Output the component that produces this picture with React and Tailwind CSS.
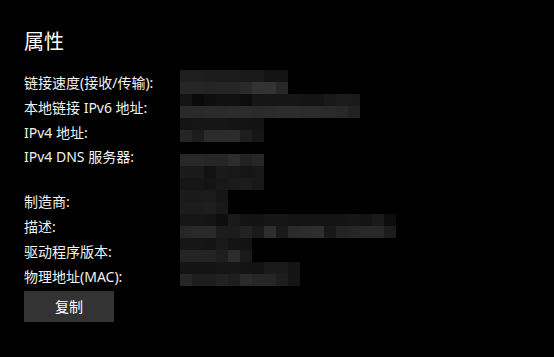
import React from "react";

const rows = [
  ["1e1e1e","1e1e1e","1c1c1c","1c1c1c","1c1c1c","1a1a1a","1a1a1a","141414","141414"],
  ["262626","262626","242424","262626","262626","2a2a2a","333333","333333","282828"],
  ["141414","0a0a0a","0e0e0e","111111","111111","0c0c0c","151515","161616","161616","161616","141414","141414","181818","1c1c1c","1a1a1a"],
  ["2a2a2a","2a2a2a","2b2b2b","2b2b2b","2c2c2c","2c2c2c","2a2a2a","2b2b2b","2c2c2c","2c2c2c","2b2b2b","2b2b2b","2a2a2a","282828","222222"],
  ["141414","161616","161616","161616","141414","141414","121212"],
  ["252525","1c1c1c","2b2b2b","2b2b2b","2b2b2b","1e1e1e","161616"],
  null,
  ["282828","282828","262626","262626","2d2d2d","222222","262626"],
  ["1a1a1a","1a1a1a","121212","1a1a1a","181818","151515","181818"],
  ["161616","161616","141414","181818","1a1a1a","1c1c1c","181818"],
  ["1a1a1a","1a1a1a","1c1c1c","161616"],
  ["1c1c1c","1c1c1c","1e1e1e","181818"],
  ["161616","161616","141414","0e0e0e","1a1a1a","141414","121212","161616","161616","141414","141414","141414","141414","141414","161616","141414","1a1a1a","0c0c0c"],
  ["262626","2a2a2a","2a2a2a","1c1c1c","1c1c1c","222222","1a1a1a","2e2e2e","1a1a1a","2a2a2a","2c2c2c","2e2e2e","181818","242424","262626","282828","282828","1c1c1c"],
  ["161616","161616","141414","1a1a1a","141414","121212"],
  ["242424","242424","242424","1e1e1e","2c2c2c","1a1a1a"],
  ["141414","141414","141414","161616","161616","141414","121212","1a1a1a","1a1a1a","141414"],
  ["262626","1e1e1e","1e1e1e","222222","1e1e1e","2a2a2a","262626","262626","1e1e1e","141414"],
];

const group1 = ["链接速度(接收/传输):", "本地链接 IPv6 地址:", "IPv4 地址:", "IPv4 DNS 服务器:"];
const group2 = ["制造商:", "描述:", "驱动程序版本:", "物理地址(MAC):"];

const font = { fontFamily: '"Noto Sans", "Noto Sans CJK SC", sans-serif' };

export default function App() {
  return (
    <div className="min-h-screen w-full bg-black text-white" style={font}>
      <div className="pl-[24px] pt-[28px]">
        <h1 className="text-[20px] leading-[28px] font-normal text-white">属性</h1>
        <div className="mt-[14px] flex items-start">
          <div className="w-[156px] shrink-0 pt-[1px]">
            <div className="flex flex-col">
              {group1.map((t) => (
                <div key={t} className="h-[24.8px] leading-[24.8px] text-[14px] whitespace-nowrap text-[#f2f2f2]">{t}</div>
              ))}
            </div>
            <div className="mt-[20px] flex flex-col">
              {group2.map((t) => (
                <div key={t} className="h-[24.8px] leading-[24.8px] text-[14px] whitespace-nowrap text-[#f2f2f2]">{t}</div>
              ))}
            </div>
          </div>
          <div className="flex flex-col">
            {rows.map((r, i) =>
              r === null ? (
                <div key={i} className="h-[12px]" />
              ) : (
                <div key={i} className="flex h-[12px]">
                  {r.map((c, j) => (
                    <div key={j} className="h-[12px] w-[12px]" style={{ backgroundColor: "#" + c }} />
                  ))}
                </div>
              )
            )}
          </div>
        </div>
        <button className="mt-[2px] flex h-[31px] w-[90px] items-center justify-center bg-[#333333] text-[14px] text-white">
          复制
        </button>
      </div>
    </div>
  );
}
